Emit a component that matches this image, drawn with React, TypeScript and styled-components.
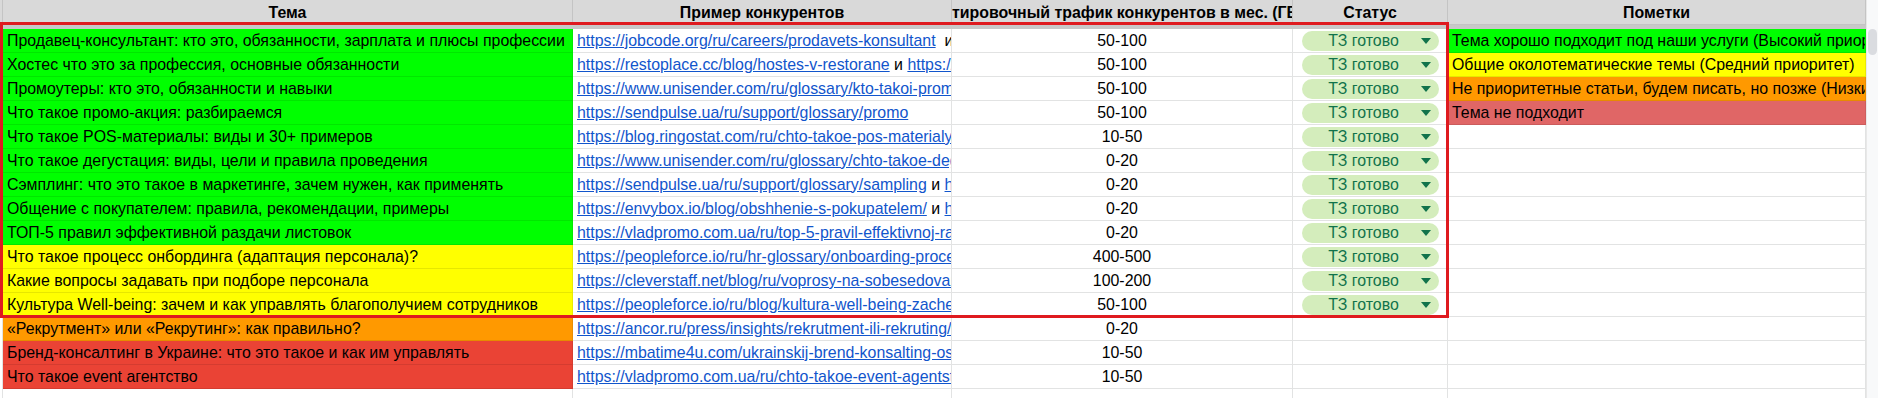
import React from "react";
import styled, { createGlobalStyle } from "styled-components";

const GlobalStyle = createGlobalStyle`
  html, body { margin: 0; padding: 0; background: #ffffff; }
  body { font-family: "Liberation Sans", Arial, sans-serif; color: #000; }
  #root { width: 1878px; height: 398px; overflow: hidden; }
`;

type Tone = "green" | "yellow" | "orange" | "red" | "lightred" | "none";

const toneBg: Record<Tone, string> = {
  green: "#00ff00",
  yellow: "#ffff00",
  orange: "#ff9900",
  red: "#ea4335",
  lightred: "#e06666",
  none: "#ffffff",
};

const COLS = "3px 570px 379px 341px 155px 418px";

const Sheet = styled.div`
  position: relative;
  width: 1878px;
  height: 398px;
  display: flex;
  overflow: hidden;
  font-size: 15.9px;
`;

const GridArea = styled.div`
  width: 1866px;
  flex: none;
  display: flex;
  flex-direction: column;
`;

const HeaderRow = styled.div`
  display: grid;
  grid-template-columns: ${COLS};
  height: 25px;
  flex: none;
  background: #d9d9d9;
`;

const HeaderCell = styled.div`
  box-sizing: border-box;
  display: flex;
  align-items: center;
  justify-content: center;
  overflow: hidden;
  white-space: nowrap;
  font-weight: bold;
  border-right: 1px solid #c4c4c4;
  border-bottom: 1px solid #c4c4c4;
  color: #000;
  padding-top: 1px;
`;

const FreezeBar = styled.div`
  height: 4px;
  flex: none;
  background: #c8c8c8;
`;

const Row = styled.div`
  display: grid;
  grid-template-columns: ${COLS};
  height: 24px;
  flex: none;
`;

const Gutter = styled.div`
  box-sizing: border-box;
  border-right: 1px solid #e2e3e3;
  background: #fff;
`;

const Cell = styled.div<{ $tone?: Tone; $center?: boolean }>`
  box-sizing: border-box;
  display: flex;
  align-items: center;
  justify-content: ${(p) => (p.$center ? "center" : "flex-start")};
  padding: 0 ${(p) => (p.$center ? "0" : "4px")};
  overflow: hidden;
  white-space: nowrap;
  background: ${(p) => toneBg[p.$tone ?? "none"]};
  border-right: 1px solid
    ${(p) => (p.$tone && p.$tone !== "none" ? "rgba(0,0,0,0.08)" : "#e2e3e3")};
  border-bottom: 1px solid
    ${(p) => (p.$tone && p.$tone !== "none" ? "rgba(0,0,0,0.09)" : "#e2e3e3")};
`;

const LinkText = styled.span`
  color: #1155cc;
  text-decoration: underline;
`;

const Plain = styled.span`
  color: #000;
  white-space: pre;
`;

const Chip = styled.div`
  box-sizing: border-box;
  margin-left: 9px;
  width: 137px;
  height: 20px;
  border-radius: 10px;
  background: #d4edbc;
  color: #11734b;
  display: flex;
  align-items: center;
`;

const ChipLabel = styled.span`
  flex: 1;
  text-align: center;
  padding-left: 4px;
`;

const ChipArrow = styled.svg`
  width: 10px;
  height: 6px;
  margin-right: 8px;
  flex: none;
`;

const StatusCell = styled(Cell)`
  padding: 0;
`;

const Scrollbar = styled.div`
  width: 12px;
  flex: none;
  background: #f8f9fa;
  border-left: 1px solid #e8e8e8;
  box-sizing: border-box;
  display: flex;
  flex-direction: column;
  align-items: center;
  padding-top: 29px;
`;

const Thumb = styled.div`
  width: 9px;
  height: 26px;
  border-radius: 5px;
  background: #dadce0;
`;

const Highlight = styled.div`
  position: absolute;
  left: 0;
  top: 22px;
  width: 1449px;
  height: 296px;
  box-sizing: border-box;
  border: 3px solid #df1a1f;
  pointer-events: none;
`;

type Seg = { t: string; link?: boolean };
type RowData = {
  topic: string;
  tone: Tone;
  link: Seg[];
  traffic: string;
  status: boolean;
  note?: { text: string; tone: Tone };
};

const L = (t: string): Seg => ({ t, link: true });
const P = (t: string): Seg => ({ t });

const rows: RowData[] = [
  {
    topic: "Продавец-консультант: кто это, обязанности, зарплата и плюсы профессии",
    tone: "green",
    link: [L("https://jobcode.org/ru/careers/prodavets-konsultant"), P("  и https://")],
    traffic: "50-100",
    status: true,
    note: { text: "Тема хорошо подходит под наши услуги (Высокий приоритет)", tone: "green" },
  },
  {
    topic: "Хостес что это за профессия, основные обязанности",
    tone: "green",
    link: [L("https://restoplace.cc/blog/hostes-v-restorane"), P(" и "), L("https://www.example.com/")],
    traffic: "50-100",
    status: true,
    note: { text: "Общие околотематические темы (Средний приоритет)", tone: "yellow" },
  },
  {
    topic: "Промоутеры: кто это, обязанности и навыки",
    tone: "green",
    link: [L("https://www.unisender.com/ru/glossary/kto-takoi-promouter/")],
    traffic: "50-100",
    status: true,
    note: { text: "Не приоритетные статьи, будем писать, но позже (Низкий приоритет)", tone: "orange" },
  },
  {
    topic: "Что такое промо-акция: разбираемся",
    tone: "green",
    link: [L("https://sendpulse.ua/ru/support/glossary/promo")],
    traffic: "50-100",
    status: true,
    note: { text: "Тема не подходит", tone: "lightred" },
  },
  {
    topic: "Что такое POS-материалы: виды и 30+ примеров",
    tone: "green",
    link: [L("https://blog.ringostat.com/ru/chto-takoe-pos-materialy/")],
    traffic: "10-50",
    status: true,
  },
  {
    topic: "Что такое дегустация: виды, цели и правила проведения",
    tone: "green",
    link: [L("https://www.unisender.com/ru/glossary/chto-takoe-degustaciya/")],
    traffic: "0-20",
    status: true,
  },
  {
    topic: "Сэмплинг: что это такое в маркетинге, зачем нужен, как применять",
    tone: "green",
    link: [L("https://sendpulse.ua/ru/support/glossary/sampling"), P(" и "), L("https://www.example.com/")],
    traffic: "0-20",
    status: true,
  },
  {
    topic: "Общение с покупателем: правила, рекомендации, примеры",
    tone: "green",
    link: [L("https://envybox.io/blog/obshhenie-s-pokupatelem/"), P(" и "), L("https://www.example.com/")],
    traffic: "0-20",
    status: true,
  },
  {
    topic: "ТОП-5 правил эффективной раздачи листовок",
    tone: "green",
    link: [L("https://vladpromo.com.ua/ru/top-5-pravil-effektivnoj-razdachi-listovok/")],
    traffic: "0-20",
    status: true,
  },
  {
    topic: "Что такое процесс онбординга (адаптация персонала)?",
    tone: "yellow",
    link: [L("https://peopleforce.io/ru/hr-glossary/onboarding-process")],
    traffic: "400-500",
    status: true,
  },
  {
    topic: "Какие вопросы задавать при подборе персонала",
    tone: "yellow",
    link: [L("https://cleverstaff.net/blog/ru/voprosy-na-sobesedovanii/")],
    traffic: "100-200",
    status: true,
  },
  {
    topic: "Культура Well-being: зачем и как управлять благополучием сотрудников",
    tone: "yellow",
    link: [L("https://peopleforce.io/ru/blog/kultura-well-being-zachem/")],
    traffic: "50-100",
    status: true,
  },
  {
    topic: "«Рекрутмент» или «Рекрутинг»: как правильно?",
    tone: "orange",
    link: [L("https://ancor.ru/press/insights/rekrutment-ili-rekruting/")],
    traffic: "0-20",
    status: false,
  },
  {
    topic: "Бренд-консалтинг в Украине: что это такое и как им управлять",
    tone: "red",
    link: [L("https://mbatime4u.com/ukrainskij-brend-konsalting-osobennosti/")],
    traffic: "10-50",
    status: false,
  },
  {
    topic: "Что такое event агентство",
    tone: "red",
    link: [L("https://vladpromo.com.ua/ru/chto-takoe-event-agentstvo/")],
    traffic: "10-50",
    status: false,
  },
];

const Arrow = () => (
  <ChipArrow viewBox="0 0 10 6">
    <path d="M0 0 L10 0 L5 6 Z" fill="#11734b" />
  </ChipArrow>
);

export default function App() {
  return (
    <>
      <GlobalStyle />
      <Sheet>
        <GridArea>
          <HeaderRow>
            <HeaderCell />
            <HeaderCell>Тема</HeaderCell>
            <HeaderCell>Пример конкурентов</HeaderCell>
            <HeaderCell>Ориентировочный трафик конкурентов в мес. (ГЕО UA)</HeaderCell>
            <HeaderCell>Статус</HeaderCell>
            <HeaderCell>Пометки</HeaderCell>
          </HeaderRow>
          <FreezeBar />
          {rows.map((r, i) => (
            <Row key={i}>
              <Gutter />
              <Cell $tone={r.tone}>{r.topic}</Cell>
              <Cell>
                {r.link.map((s, j) =>
                  s.link ? <LinkText key={j}>{s.t}</LinkText> : <Plain key={j}>{s.t}</Plain>
                )}
              </Cell>
              <Cell $center>{r.traffic}</Cell>
              <StatusCell>
                {r.status && (
                  <Chip>
                    <ChipLabel>ТЗ готово</ChipLabel>
                    <Arrow />
                  </Chip>
                )}
              </StatusCell>
              <Cell $tone={r.note?.tone ?? "none"}>{r.note?.text ?? ""}</Cell>
            </Row>
          ))}
          <Row>
            <Gutter />
            <Cell />
            <Cell />
            <Cell />
            <Cell />
            <Cell />
          </Row>
        </GridArea>
        <Scrollbar>
          <Thumb />
        </Scrollbar>
        <Highlight />
      </Sheet>
    </>
  );
}
